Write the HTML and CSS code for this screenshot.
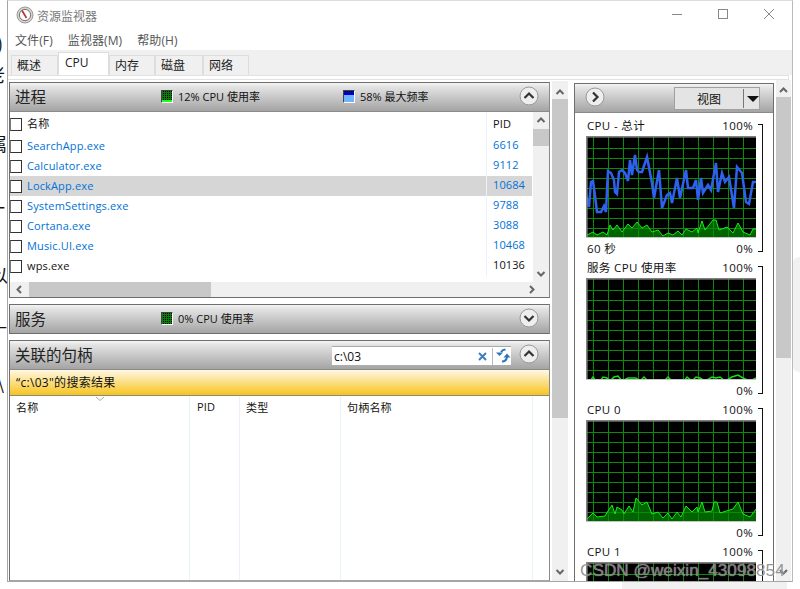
FILE: index.html
```html
<!DOCTYPE html>
<html lang="zh">
<head>
<meta charset="utf-8">
<title>资源监视器</title>
<link rel="stylesheet" href="styles.css">
</head>
<body>
<div class="behind">
  <span class="frag f1">)</span><span class="frag f2">老</span><span class="frag f3">属</span><span class="frag f7">冫</span><span class="frag f8">一</span><span class="frag f4">以</span><span class="frag f5">—</span><span class="frag f6">\</span>
</div>
<div class="greyblock gb-right"></div>
<div class="greyblock gb-bottom"></div>
<div class="window">
  <header class="titlebar">
    <svg class="appicon" width="18" height="18" viewBox="0 0 18 18"><circle cx="9" cy="9" r="8" fill="#d8d4cc" stroke="#999"/><circle cx="9" cy="9" r="5.6" fill="#fff" stroke="#777"/><path d="M6 4.5 L10.5 12" stroke="#b5302a" stroke-width="1.6"/></svg>
    <span class="title">资源监视器</span>
    <div class="winctl">
      <svg width="12" height="12" viewBox="0 0 12 12"><path d="M1 5.500H11" stroke="#888"/></svg>
      <svg width="12" height="12" viewBox="0 0 12 12"><rect x="1.5" y="0.5" width="9" height="9" fill="none" stroke="#888"/></svg>
      <svg width="12" height="12" viewBox="0 0 12 12"><path d="M1 0L11 10M11 0L1 10" stroke="#888"/></svg>
    </div>
  </header>
  <nav class="menubar"><span>文件(F)</span><span>监视器(M)</span><span>帮助(H)</span></nav>
  <div class="tabs">
    <span class="tab t1">概述</span><span class="tab active">CPU</span><span class="tab t3">内存</span><span class="tab t4">磁盘</span><span class="tab t5">网络</span>
  </div>
  <div class="tabline"></div>
  <div class="content">
    <div class="leftcol">
      <section class="panel p-proc">
        <div class="phead">
          <span class="ptitle">进程</span>
          <span class="meter m1"><i class="sw green"></i>12% CPU 使用率</span>
          <span class="meter m2"><i class="sw blue"></i>58% 最大频率</span>
          <svg class="round" width="20" height="20" viewBox="0 0 20 20"><circle cx="10" cy="10" r="9" fill="#eee" stroke="#999"/><path d="M5.5 12L10 7.5L14.5 12" fill="none" stroke="#333" stroke-width="2.2"/></svg>
        </div>
        <div class="listwrap">
          <div class="list">
            <div class="row hdr"><i class="cb"></i><span class="nm">名称</span><span class="pid">PID</span></div>
            <div class="row"><i class="cb"></i><span class="nm link">SearchApp.exe</span><span class="pid link">6616</span></div>
            <div class="row"><i class="cb"></i><span class="nm link">Calculator.exe</span><span class="pid link">9112</span></div>
            <div class="row sel"><i class="cb"></i><span class="nm link">LockApp.exe</span><span class="pid link">10684</span></div>
            <div class="row"><i class="cb"></i><span class="nm link">SystemSettings.exe</span><span class="pid link">9788</span></div>
            <div class="row"><i class="cb"></i><span class="nm link">Cortana.exe</span><span class="pid link">3088</span></div>
            <div class="row"><i class="cb"></i><span class="nm link">Music.UI.exe</span><span class="pid link">10468</span></div>
            <div class="row"><i class="cb"></i><span class="nm">wps.exe</span><span class="pid">10136</span></div>
          </div>
          <div class="vbar">
            <svg class="arr" width="16" height="15" viewBox="0 0 16 15"><path d="M4.5 10L8 6.5L11.5 10" fill="none" stroke="#666" stroke-width="2"/></svg>
            <div class="vthumb"></div>
            <div class="grow"></div>
            <svg class="arr" width="16" height="15" viewBox="0 0 16 15"><path d="M4.5 5L8 8.5L11.5 5" fill="none" stroke="#666" stroke-width="2"/></svg>
          </div>
        </div>
        <div class="hbar">
          <svg class="arr" width="19" height="15" viewBox="0 0 19 15"><path d="M11 4L7.5 7.5L11 11" fill="none" stroke="#666" stroke-width="2"/></svg>
          <div class="hthumb"></div>
          <div class="grow"></div>
          <svg class="arr" width="24" height="15" viewBox="0 0 24 15"><path d="M5 4L8.500 7.5L5 11" fill="none" stroke="#666" stroke-width="2"/></svg>
        </div>
      </section>
      <section class="panel p-serv">
        <div class="phead">
          <span class="ptitle">服务</span>
          <span class="meter m1"><i class="sw green2"></i>0% CPU 使用率</span>
          <svg class="round" width="20" height="20" viewBox="0 0 20 20"><circle cx="10" cy="10" r="9" fill="#eee" stroke="#999"/><path d="M5.500 8L10 12.500L14.500 8" fill="none" stroke="#333" stroke-width="2.2"/></svg>
        </div>
      </section>
      <section class="panel p-hand">
        <div class="phead">
          <span class="ptitle">关联的句柄</span>
          <div class="search">
            <span class="q">c:\03</span>
            <svg class="xicon" width="11" height="11" viewBox="0 0 11 11"><path d="M2 2L9 9M9 2L2 9" stroke="#3f7fbd" stroke-width="2"/></svg>
            <i class="sep"></i>
            <svg width="16" height="16" viewBox="0 0 16 16"><path d="M10.500 1.500C8.500 1.500 7 2.500 6 4" fill="none" stroke="#2f73bd" stroke-width="2"/><path d="M1 4.500H8L4.500 8Z" fill="#2f73bd"/><path d="M7 13.500C9.500 13.500 11.500 12 12 9" fill="none" stroke="#2f73bd" stroke-width="2"/><path d="M8.500 9.500L12 5.500L15.500 9.500Z" fill="#2f73bd"/></svg>
          </div>
          <svg class="round" width="20" height="20" viewBox="0 0 20 20"><circle cx="10" cy="10" r="9" fill="#eee" stroke="#999"/><path d="M5.500 12L10 7.500L14.500 12" fill="none" stroke="#333" stroke-width="2.2"/></svg>
        </div>
        <div class="banner">“c:\03"的搜索结果</div>
        <div class="htable">
          <svg class="sort" width="10" height="6" viewBox="0 0 10 6"><path d="M1 1L5 4.500L9 1" fill="none" stroke="#aaa"/></svg>
          <div class="hcol c1">名称</div>
          <div class="hcol c2">PID</div>
          <div class="hcol c3">类型</div>
          <div class="hcol c4">句柄名称</div>
          <div class="hcol c5"></div>
        </div>
      </section>
    </div>
    <div class="mainbar">
      <svg class="arr" width="16" height="18" viewBox="0 0 16 18"><path d="M4.500 13L8 9.500L11.500 13" fill="none" stroke="#666" stroke-width="2"/></svg>
      <div class="mthumb"></div>
      <div class="grow"></div>
      <svg class="arr" width="16" height="16" viewBox="0 0 16 16"><path d="M4.500 5L8 8.500L11.500 5" fill="none" stroke="#666" stroke-width="2"/></svg>
    </div>
    <div class="rightcol">
      <div class="rhead">
        <svg class="round2" width="20" height="20" viewBox="0 0 20 20"><circle cx="10" cy="10" r="9" fill="#eee" stroke="#999"/><path d="M8 5.500L12.500 10L8 14.500" fill="none" stroke="#333" stroke-width="2.2"/></svg>
        <div class="viewbtn"><span class="vt">视图</span><i class="vsep"></i><i class="caret"></i></div>
      </div>
      <div class="graphs">
        <div class="graph">
          <div class="gmain">
            <div class="gl"><span>CPU - 总计</span><span>100%</span></div>
            <svg class="chart" width="170" height="102" viewBox="586 136 170 102">
              <use href="#grid" x="586" y="136"/>
              <polygon fill="#006400" points="586,238 587,235 593,232 597,235 603,232 607,235 610,225 613,230 617,225 622,232 628,224 632,228 637,222 642,228 647,225 652,232 658,230 663,236 668,233 673,235 678,231 682,235 686,229 692,232 697,228 698,233 702,221 705,230 713,220 716,220 719,230 727,227 733,233 738,223 743,232 750,235 753,229 756,229 756,238"/>
              <use href="#gridv" x="586" y="136"/>
              <polyline fill="none" stroke="#12f012" points="587,235 593,232 597,235 603,232 607,235 610,225 613,230 617,225 622,232 628,224 632,228 637,222 642,228 647,225 652,232 658,230 663,236 668,233 673,235 678,231 682,235 686,229 692,232 697,228 698,233 702,221 705,230 713,220 716,220 719,230 727,227 733,233 738,223 743,232 750,235 753,229 756,229"/>
              <polyline fill="none" stroke="#2e62ee" stroke-width="2.500" points="586,195 589,207 591,182 593,181 595,196 597,212 601,212 604,206 606,212 607,190 608,171 611,173 614,180 615,192 617,194 619,172 622,170 625,173 628,181 630,160 632,175 635,155 637,170 639,172 642,172 647,157 652,183 654,198 659,170 662,208 667,195 670,193 672,203 677,178 680,198 686,170 688,188 693,188 696,180 698,200 701,178 703,193 708,185 711,190 716,163 718,192 722,173 725,182 729,177 734,208 737,167 742,173 746,202 749,204 753,182 756,182"/>
              <use href="#frame" x="586" y="136"/>
            </svg>
            <div class="gf"><span>60 秒</span><span>0%</span></div>
          </div>
          <i class="bracket"></i>
        </div>
        <div class="graph">
          <div class="gmain">
            <div class="gl"><span>服务 CPU 使用率</span><span>100%</span></div>
            <svg class="chart" width="170" height="102" viewBox="586 136 170 102">
              <use href="#grid" x="586" y="136"/>
              <polyline fill="none" stroke="#12e012" stroke-width="1.500" points="586,239 590,239 593,235 596,239 600,239 603,235 607,236 610,239 614,235 618,234 622,239 628,236 636,236 640,239 644,235 648,239 664,239 668,235 672,239 684,239 687,235 692,239 696,235 700,236 705,239 712,235 716,236 720,235 725,239 732,235 738,233 743,236 750,239 756,236"/>
              <use href="#frame" x="586" y="136"/>
            </svg>
            <div class="gf"><span></span><span>0%</span></div>
          </div>
          <i class="bracket"></i>
        </div>
        <div class="graph">
          <div class="gmain">
            <div class="gl"><span>CPU 0</span><span>100%</span></div>
            <svg class="chart" width="170" height="102" viewBox="586 421 170 102">
              <use href="#grid" x="586" y="421"/>
              <polygon fill="#006400" points="586,523 587,520 593,514 597,518 605,517 608,512 612,506 615,515 617,508 622,511 624,515 629,507 633,513 636,499 642,506 647,503 652,515 658,513 663,519 668,514 672,520 677,513 681,518 686,507 692,513 697,508 698,513 702,503 705,513 712,512 714,503 717,503 720,514 733,510 738,503 743,515 750,518 756,510 756,523"/>
              <use href="#gridv" x="586" y="421"/>
              <polyline fill="none" stroke="#12f012" points="587,520 593,514 597,518 605,517 608,512 612,506 615,515 617,508 622,511 624,515 629,507 633,513 636,499 642,506 647,503 652,515 658,513 663,519 668,514 672,520 677,513 681,518 686,507 692,513 697,508 698,513 702,503 705,513 712,512 714,503 717,503 720,514 733,510 738,503 743,515 750,518 756,510"/>
              <use href="#frame" x="586" y="421"/>
            </svg>
            <div class="gf"><span></span><span>0%</span></div>
          </div>
          <i class="bracket"></i>
        </div>
        <div class="graph">
          <div class="gmain">
            <div class="gl"><span>CPU 1</span><span>100%</span></div>
            <svg class="chart" width="170" height="102" viewBox="586 136 170 102">
              <use href="#grid" x="586" y="136"/>
              <use href="#frame" x="586" y="136"/>
            </svg>
          </div>
          <i class="bracket"></i>
        </div>
      </div>
    </div>
    <div class="rbar">
      <svg class="arr" width="15" height="17" viewBox="0 0 15 17"><path d="M4 12L7.500 8.500L11 12" fill="none" stroke="#666" stroke-width="2"/></svg>
      <div class="rthumb"></div>
      <div class="grow"></div>
      <svg class="arr" width="15" height="16" viewBox="0 0 15 16"><path d="M4 5L7.500 8.500L11 5" fill="none" stroke="#666" stroke-width="2"/></svg>
    </div>
  </div>
</div>
<div class="watermark">CSDN @weixin_43098854</div>
<svg class="defs" width="0" height="0">
  <defs>
    <g id="gridv" stroke="#0a8c0a" stroke-width="1">
      <path d="M7.500 0V102M22.500 0V102M37.500 0V102M52.500 0V102M67.500 0V102M82.500 0V102M97.500 0V102M112.500 0V102M127.500 0V102M142.500 0V102M157.500 0V102"/>
      <path d="M0 12.500H170M0 22.500H170M0 32.500H170M0 42.500H170M0 52.500H170M0 62.500H170M0 72.500H170M0 82.500H170M0 92.500H170"/>
    </g>
    <g id="grid">
      <rect width="170" height="102" fill="#000"/>
      <use href="#gridv"/>
    </g>
    <g id="frame" fill="none">
      <path d="M0 0.500H170M0.500 0V102" stroke="#808080"/>
      <path d="M0 1.500H170M1.500 1V102" stroke="#8a8a8a" stroke-opacity=".6"/>
      <path d="M0 101.500H170" stroke="#c4c4c4"/>
    </g>
  </defs>
</svg>
</body>
</html>
```
FILE: styles.css
```css
* { box-sizing: border-box; }
html, body { margin: 0; padding: 0; height: 589px; overflow: hidden; background: #fff; }
body {
  position: relative;
  font-family: "Open Sans", "Noto Sans CJK SC", sans-serif;
  font-size: 11px;
  color: #111;
}
i { display: block; font-style: normal; }
.grow { flex: 1; }
.arr { display: block; flex: none; }
.defs { position: absolute; }

.behind { position: absolute; left: 0; top: 0; width: 7px; height: 589px; overflow: hidden; }
.frag { position: absolute; font-family: "Noto Sans CJK SC", sans-serif; font-size: 18px; line-height: 20px; color: #111; }
.f1 { left: -3px; top: 33px; }
.f2 { left: -13px; top: 64px; }
.f3 { left: -11px; top: 133px; }
.f7 { left: -12px; top: 166px; }
.f8 { left: -13px; top: 197px; }
.f4 { left: -10px; top: 265px; }
.f5 { left: -9px; top: 315px; }
.f6 { left: -3px; top: 372px; }

.greyblock { position: absolute; background: #f1f1f1; }
.gb-right { left: 793px; top: 257px; width: 7px; height: 115px; border-radius: 6px 0 0 6px; }
.gb-bottom { left: 622px; top: 582px; width: 165px; height: 7px; }

.window {
  position: relative;
  margin-left: 7px;
  width: 786px;
  height: 582px;
  background: #fff;
  border: 1px solid #a6a6a6;
  border-top-color: #ddd;
  border-right-color: #bbb;
  display: flex;
  flex-direction: column;
}
.titlebar { height: 31px; display: flex; align-items: center; padding: 0 0 3px 8px; flex: none; }
.title { margin-left: 3px; font-size: 12px; color: #777; font-family: "Noto Sans CJK SC", sans-serif; }
.appicon { flex: none; }
.winctl { margin-left: auto; display: flex; gap: 34px; padding-right: 17px; }
.menubar { height: 18px; flex: none; display: flex; padding-left: 7px; gap: 15px; font-size: 12px; line-height: 18px; color: #555; letter-spacing: .1px; }
.tabs { height: 25px; flex: none; background: #f0f0f0; display: flex; align-items: flex-end; padding-left: 3px; font-size: 12px; }
.tab { height: 20px; line-height: 19px; background: #f0f0f0; border: 1px solid #ddd; border-bottom: 0; padding-left: 5px; color: #222; }
.t1 { width: 47px; }
.tab.active { width: 51px; height: 23px; padding-left: 6px; background: #fff; line-height: 20px; }
.t3 { width: 46px; }
.t4 { width: 48px; }
.t5 { width: 46px; }
.tabline { height: 5px; flex: none; margin-right: 3px; background: #fff; border: 1px solid #e2e2e2; border-left: 0; }

.content { flex: 1; min-height: 0; display: flex; align-items: stretch; margin-right: 3px; }
.leftcol { width: 541px; margin-left: 1px; padding-top: 2px; display: flex; flex-direction: column; flex: none; }
.panel { border: 1px solid #6e6e6e; background: #fff; border-right-color: #8a8a8a; display: flex; flex-direction: column; }
.p-proc { height: 216px; flex: none; }
.p-serv { height: 30px; margin-top: 6px; flex: none; }
.p-hand { flex: 1; margin-top: 6px; border-bottom-color: #a6a6a6; min-height: 0; }

.phead {
  position: relative;
  height: 29px;
  flex: none;
  background: linear-gradient(#f4f4f4, #e2e2e2 15%, #a4a4a4);
  border-bottom: 1px solid #8a8a8a;
  display: flex;
  align-items: center;
  padding: 0 0 2px 5px;
}
.p-serv .phead { border-bottom: 0; height: 28px; }
.ptitle { font-size: 15.500px; font-family: "Noto Sans CJK SC", sans-serif; color: #222; }
.meter { position: absolute; top: 5px; height: 16px; display: flex; align-items: center; gap: 5px; font-size: 11px; color: #111; white-space: nowrap; }
.m1 { left: 151px; }
.m2 { left: 333px; }
.sw { width: 12px; height: 13px; border: 1px solid #fff; border-top-color: #444; border-left-color: #444; }
.green { background: linear-gradient(transparent 80%, #1cff1c 80%), conic-gradient(#000 25%, transparent 0) 0 0 / 2px 2px, #0a7d0a; }
.green2 { background: conic-gradient(#000 25%, transparent 0) 0 0 / 2px 2px, #0a7d0a; }
.blue { background: linear-gradient(transparent 35%, #6eb4ff 35%), conic-gradient(#000 25%, transparent 0) 0 0 / 2px 2px, #0000e8; }
.round { position: absolute; right: 10px; top: 3px; }

.listwrap { flex: 1; min-height: 0; display: flex; }
.list { flex: 1; min-width: 0; background: #fff; overflow: hidden; }
.row { height: 20px; display: flex; align-items: center; }
.row.hdr { height: 24px; }
.row.sel { background: #d6d6d6; }
.cb { width: 12px; height: 13px; border: 1px solid #333; border-left-color: #777; background: #fff; flex: none; }
.nm { margin: 0 0 2px 5px; width: 459px; flex: none; color: #111; font-size: 11px; letter-spacing: .15px; white-space: nowrap; }
.pid { padding-left: 6px; height: 100%; line-height: 18px; border-left: 1px solid #eaf2fa; font-size: 11px; letter-spacing: .1px; white-space: nowrap; }
.hdr .pid { line-height: 23px; }
.link { color: #0072d6; }
.vbar { width: 16px; flex: none; background: #f0f0f0; display: flex; flex-direction: column; margin-left: 1px; }
.vthumb { height: 17px; background: #c8c8c8; flex: none; margin-top: 2px; }
.hbar { height: 15px; flex: none; background: #f0f0f0; display: flex; }
.hthumb { width: 182px; background: #c8c8c8; flex: none; }

.search { position: absolute; left: 322px; top: 5px; width: 179px; height: 19px; background: #fff; border-top: 1px solid #aaa; display: flex; align-items: center; padding-left: 2px; }
.q { flex: 1; font-size: 12px; }
.xicon { margin-right: 4px; }
.sep { width: 1px; height: 17px; background: #bbb; margin-right: 2px; }
.banner { height: 26px; flex: none; background: linear-gradient(#fff8e4, #f7c41e); border-bottom: 1px solid #888; padding-left: 6px; font-size: 12px; letter-spacing: .3px; line-height: 25px; color: #111; }
.htable { flex: 1; position: relative; display: flex; min-height: 0; }
.sort { position: absolute; left: 85px; top: 0; }
.hcol { border-right: 1px solid #eaf2fa; padding: 3px 0 0 6px; font-size: 11px; letter-spacing: .2px; }
.c1 { width: 180px; }
.c2 { width: 50px; padding-left: 7px; }
.c3 { width: 101px; }
.c4 { width: 192px; }
.c5 { flex: 1; border-right: 0; }

.mainbar { width: 16px; margin-left: 2px; margin-top: 1px; flex: none; background: #f0f0f0; display: flex; flex-direction: column; }
.mthumb { height: 319px; background: #c8c8c8; flex: none; }

.rightcol { position: relative; width: 200px; margin-left: 6px; margin-top: 3px; flex: none; border: 1px solid #6e6e6e; border-bottom: 0; overflow: hidden; display: flex; flex-direction: column; background: #fff; }
.rhead { position: relative; height: 29px; flex: none; background: linear-gradient(#f4f4f4, #e2e2e2 15%, #a4a4a4); border-bottom: 1px solid #8a8a8a; }
.round2 { position: absolute; left: 10px; top: 3px; }
.viewbtn { position: absolute; left: 99px; top: 3px; width: 86px; height: 23px; background: #e4e4e4; border: 1px solid #a0a0a0; display: flex; align-items: center; }
.vt { width: 68px; text-align: center; font-size: 12px; font-family: "Noto Sans CJK SC", sans-serif; }
.vsep { width: 1px; height: 19px; background: #777; }
.caret { margin-left: 3px; width: 0; height: 0; border-left: 6px solid transparent; border-right: 6px solid transparent; border-top: 6px solid #111; }

.graphs { padding: 5px 0 0 11px; display: flex; flex-direction: column; }
.graph { height: 142px; flex: none; display: flex; }
.gmain { width: 170px; flex: none; }
.gl, .gf { height: 18px; display: flex; justify-content: space-between; align-items: center; padding: 0 3px 0 1px; font-size: 11.500px; letter-spacing: .35px; color: #111; }
.gl { padding-bottom: 4px; }
.gf { padding-top: 2px; }
.chart { display: block; }
.bracket { width: 5px; height: 128px; margin: 6px 0 0 2px; border: 1px solid #111; border-left: 0; flex: none; }

.rbar { width: 15px; margin-left: 2px; flex: none; background: #f0f0f0; display: flex; flex-direction: column; margin-top: 0; }
.rthumb { height: 261px; background: #c8c8c8; flex: none; }

.watermark { position: absolute; left: 580px; top: 559px; font-family: "Liberation Sans", sans-serif; font-size: 17.200px; line-height: 22px; color: rgba(120,120,120,.8); text-shadow: 0 0 1px rgba(255,255,255,.7); white-space: nowrap; }
```
